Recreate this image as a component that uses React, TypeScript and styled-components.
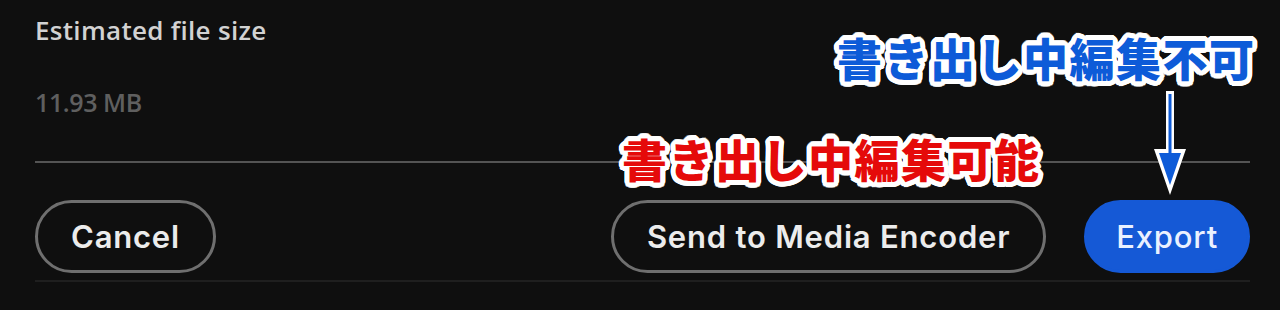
import styled, { createGlobalStyle } from "styled-components"

const GlobalStyle = createGlobalStyle`
    html, body {
        margin: 0;
        padding: 0;
        background: #0f0f0f;
    }
`

const outline = (r: number) => {
    const parts: string[] = []
    for (let i = 0; i < 24; i++) {
        const a = (i / 24) * Math.PI * 2
        parts.push(`${(Math.cos(a) * r).toFixed(1)}px ${(Math.sin(a) * r).toFixed(1)}px 0 #fff`)
    }
    return parts.join(", ")
}

export default function App() {
    return (
        <>
            <GlobalStyle />
            <Dialog>
                <Label>Estimated file size</Label>
                <Value>11.93 MB</Value>
                <Divider />
                <Footer>
                    <PillButton>Cancel</PillButton>
                    <RightGroup>
                        <PillButton>Send to Media Encoder</PillButton>
                        <PillButton $primary>Export</PillButton>
                    </RightGroup>
                </Footer>

                <Note $color="#e50a0a" $left={622} $top={129}>書き出し中編集可能</Note>
                <Note $color="#0d5bd8" $left={837} $top={28}>書き出し中編集不可</Note>
                <Arrow width="40" height="110" viewBox="0 0 40 110">
                    <path d="M16 2 H24 V60 H36 L20 106 L4 60 H16 Z" fill="#fff" />
                    <path d="M18.5 5 H21.5 V64 H31 L20 96 L9 64 H18.5 Z" fill="#0d5bd8" />
                </Arrow>
            </Dialog>
        </>
    )
}

const Dialog = styled.div`
    position: relative;
    height: 310px;
    box-sizing: border-box;
    padding: 15px 30px 0 35px;
    display: flex;
    flex-direction: column;
    background: #0f0f0f;
    font-family: "Open Sans", "Liberation Sans", sans-serif;
    overflow: hidden;
`
const Label = styled.div`
    font-size: 26px;
    font-weight: 600;
    line-height: 30px;
    color: #d2d2d2;
    letter-spacing: 0.3px;
`
const Value = styled.div`
    margin-top: 42px;
    font-size: 25px;
    font-weight: 600;
    line-height: 30px;
    color: #5f5f5f;
    letter-spacing: -0.4px;
`
const Divider = styled.div`
    margin-top: 44px;
    height: 2px;
    background: #545454;
`
const Footer = styled.div`
    margin-top: 37px;
    display: flex;
    justify-content: space-between;
    align-items: center;
    padding-bottom: 7px;
    border-bottom: 2px solid #1f1f1f;
`
const RightGroup = styled.div`
    display: flex;
    gap: 38px;
`
const PillButton = styled.button<{ $primary?: boolean }>`
    height: 73px;
    box-sizing: border-box;
    padding: 0 ${p => (p.$primary ? "29px" : "33px")};
    border-radius: 37px;
    border: 3px solid ${p => (p.$primary ? "#1559d6" : "#6f6f6f")};
    background: ${p => (p.$primary ? "#1559d6" : "transparent")};
    color: ${p => (p.$primary ? "#eaf1ff" : "#ececec")};
    font-family: Inter, "Liberation Sans", sans-serif;
    font-size: 31px;
    font-weight: ${p => (p.$primary ? 500 : 600)};
    letter-spacing: 0.8px;
`
const Note = styled.div<{ $color: string; $left: number; $top: number }>`
    position: absolute;
    left: ${p => p.$left}px;
    top: ${p => p.$top}px;
    font-family: "Noto Sans CJK JP", sans-serif;
    font-weight: 900;
    font-size: 45px;
    line-height: 60px;
    letter-spacing: 1.5px;
    color: ${p => p.$color};
    white-space: nowrap;
    text-shadow: ${outline(5)}, ${outline(3)};
`
const Arrow = styled.svg`
    position: absolute;
    left: 1150px;
    top: 89px;
`
